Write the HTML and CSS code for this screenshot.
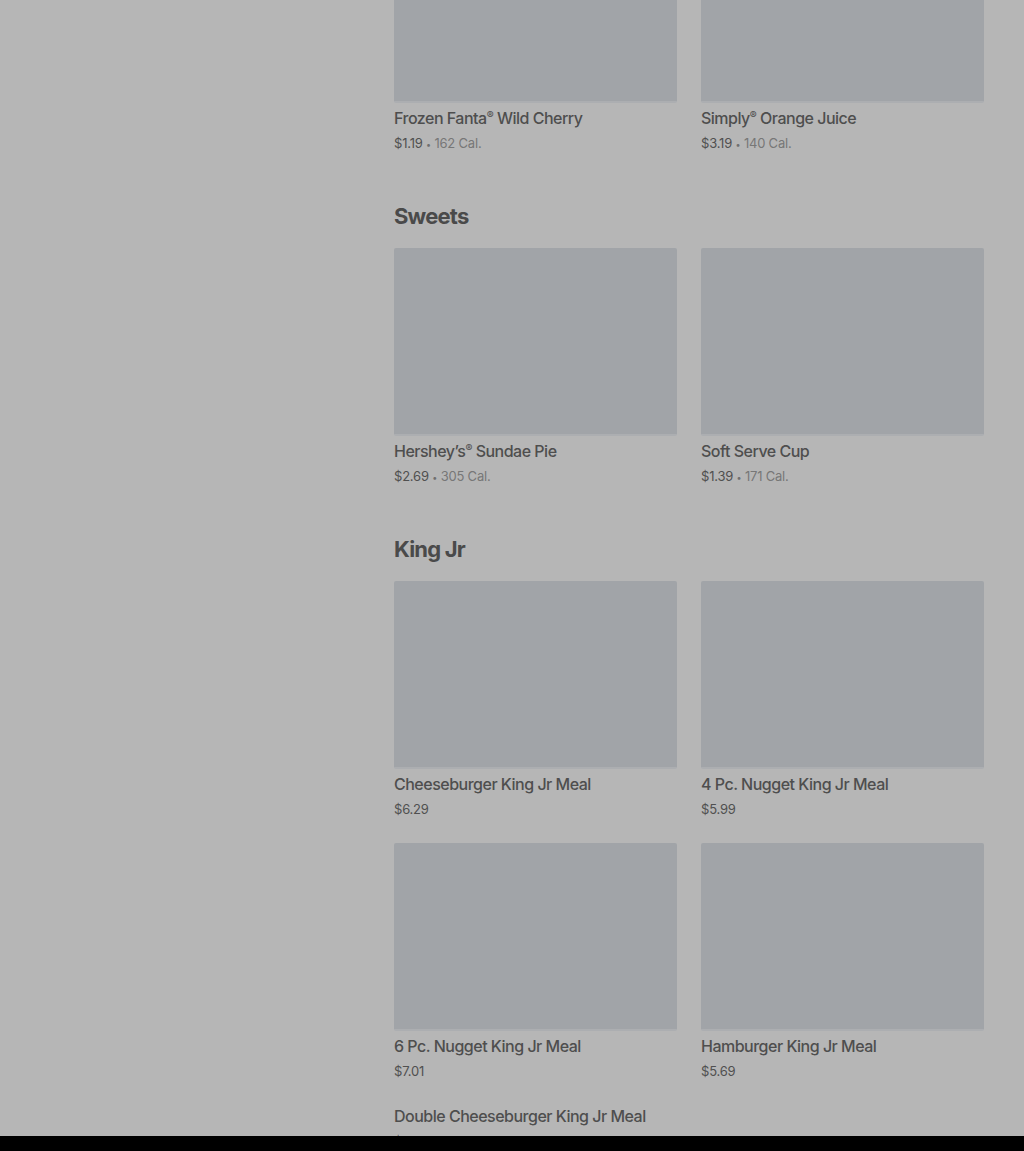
FILE: index.html
```html
<!DOCTYPE html>
<html lang="en">

<head>
  <meta charset="UTF-8" />
  <meta name="viewport" content="width=device-width, initial-scale=1.0" />
  <title>Menu</title>
  <link rel="stylesheet" href="styles.css">
</head>

<body>
  <div class="page">
    <aside class="sidebar"></aside>

    <main class="menu">
      <section class="section first">
        <div class="grid">
          <div class="item">
            <div class="thumb"></div>
            <p class="name">Frozen Fanta<span class="reg">®</span> Wild Cherry</p>
            <p class="meta"><span class="price">$1.19</span> <span class="dot">•</span> <span class="cal">162 Cal.</span></p>
          </div>
          <div class="item">
            <div class="thumb"></div>
            <p class="name">Simply<span class="reg">®</span> Orange Juice</p>
            <p class="meta"><span class="price">$3.19</span> <span class="dot">•</span> <span class="cal">140 Cal.</span></p>
          </div>
        </div>
      </section>

      <section class="section">
        <h2 class="section-title">Sweets</h2>
        <div class="grid">
          <div class="item">
            <div class="thumb"></div>
            <p class="name">Hershey’s<span class="reg">®</span> Sundae Pie</p>
            <p class="meta"><span class="price">$2.69</span> <span class="dot">•</span> <span class="cal">305 Cal.</span></p>
          </div>
          <div class="item">
            <div class="thumb"></div>
            <p class="name">Soft Serve Cup</p>
            <p class="meta"><span class="price">$1.39</span> <span class="dot">•</span> <span class="cal">171 Cal.</span></p>
          </div>
        </div>
      </section>

      <section class="section">
        <h2 class="section-title">King Jr</h2>
        <div class="grid">
          <div class="item">
            <div class="thumb"></div>
            <p class="name">Cheeseburger King Jr Meal</p>
            <p class="meta"><span class="price">$6.29</span></p>
          </div>
          <div class="item">
            <div class="thumb"></div>
            <p class="name">4 Pc. Nugget King Jr Meal</p>
            <p class="meta"><span class="price">$5.99</span></p>
          </div>
          <div class="item">
            <div class="thumb"></div>
            <p class="name">6 Pc. Nugget King Jr Meal</p>
            <p class="meta"><span class="price">$7.01</span></p>
          </div>
          <div class="item">
            <div class="thumb"></div>
            <p class="name">Hamburger King Jr Meal</p>
            <p class="meta"><span class="price">$5.69</span></p>
          </div>
          <div class="item">
            <p class="name">Double Cheeseburger King Jr Meal</p>
            <p class="meta"><span class="price">$6.89</span></p>
          </div>
        </div>
      </section>
    </main>
  </div>

  <div class="bottom-bar"></div>
</body>

</html>
```

FILE: styles.css
```css
body {
  margin: 0;
  background-color: #b6b6b6;
  color: #4b4b4b;
  font-family: Inter, "Noto Sans", sans-serif;
}

.page {
  display: flex;
  gap: 24px;
  padding-right: 40px;
}

.sidebar {
  width: 370px;
  flex-shrink: 0;
}

.menu {
  flex: 1;
  margin-top: -85px;
}

.section {
  margin-top: 45px;
}

.section.first {
  margin-top: 0;
}

.section-title {
  margin: 0 0 16px;
  font-size: 22px;
  line-height: 32px;
  font-weight: 700;
  letter-spacing: -0.8px;
  color: #4a4a4a;
}

.grid {
  display: grid;
  grid-template-columns: 1fr 1fr;
  column-gap: 24px;
  row-gap: 24px;
}

.thumb {
  height: 186px;
  background-color: #a1a4a8;
  border-bottom: 2px solid #acaeb1;
  border-radius: 2px;
}

.name {
  margin: 0;
  font-size: 16px;
  line-height: 22px;
  font-weight: 500;
  letter-spacing: -0.5px;
  color: #4e4e4e;
}

.thumb + .name {
  margin-top: 4px;
}

.reg {
  font-size: 0.65em;
  vertical-align: 0.45em;
  line-height: 0;
}

.meta {
  margin: 4px 0 0;
  font-size: 13px;
  line-height: 20px;
  letter-spacing: -0.2px;
}

.price {
  color: #505050;
}

.dot {
  font-size: 9px;
  color: #6f6f6f;
}

.cal {
  color: #777777;
}

.bottom-bar {
  position: fixed;
  left: 0;
  right: 0;
  bottom: 0;
  height: 15px;
  background-color: #000000;
}
```
